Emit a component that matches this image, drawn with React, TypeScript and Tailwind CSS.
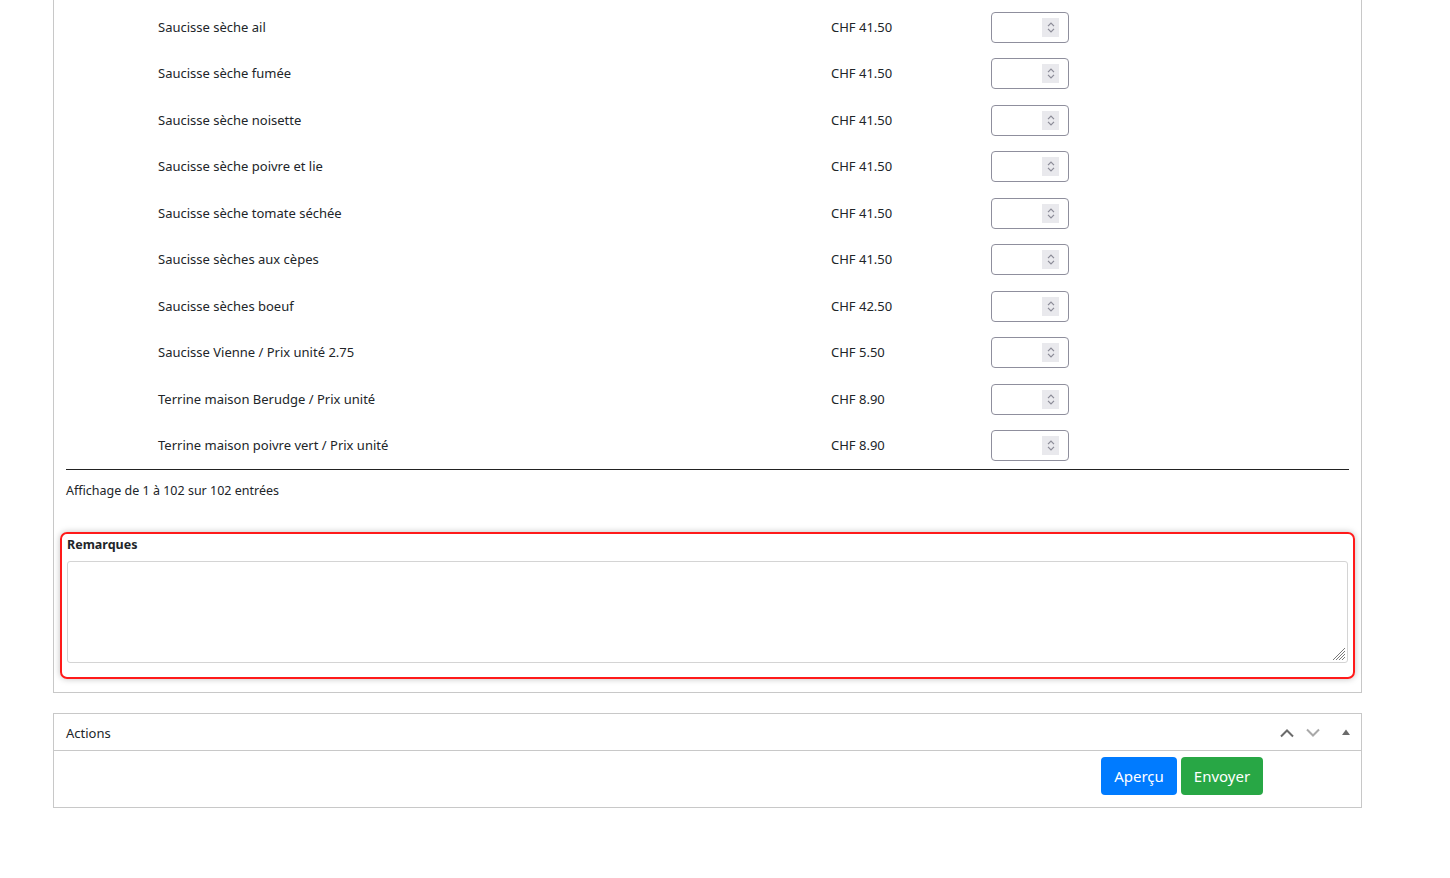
import React from 'react';

const rows: [string, string][] = [
  ['Saucisse sèche ail', 'CHF 41.50'],
  ['Saucisse sèche fumée', 'CHF 41.50'],
  ['Saucisse sèche noisette', 'CHF 41.50'],
  ['Saucisse sèche poivre et lie', 'CHF 41.50'],
  ['Saucisse sèche tomate séchée', 'CHF 41.50'],
  ['Saucisse sèches aux cèpes', 'CHF 41.50'],
  ['Saucisse sèches boeuf', 'CHF 42.50'],
  ['Saucisse Vienne / Prix unité 2.75', 'CHF 5.50'],
  ['Terrine maison Berudge / Prix unité', 'CHF 8.90'],
  ['Terrine maison poivre vert / Prix unité', 'CHF 8.90'],
];

function QtyInput() {
  return (
    <div className="w-[78px] h-[31px] border border-[#8f8f9d] rounded-[4px] flex items-center justify-end pr-[9px] bg-white">
      <div className="w-[17px] h-[19px] bg-[#e9e9ed] flex flex-col items-center justify-center gap-[1px]">
        <svg width="8" height="5" viewBox="0 0 8 5" fill="none" stroke="#8a8a96" strokeWidth="1.2">
          <path d="M1 4.2 L4 1.2 L7 4.2" />
        </svg>
        <svg width="8" height="5" viewBox="0 0 8 5" fill="none" stroke="#8a8a96" strokeWidth="1.2">
          <path d="M1 0.8 L4 3.8 L7 0.8" />
        </svg>
      </div>
    </div>
  );
}

export default function App() {
  return (
    <div className="w-[1450px] h-[878px] bg-white text-[#212529] text-[13px] font-['Noto_Sans',sans-serif] overflow-hidden">
      <div className="ml-[53px] w-[1309px] border-x border-b border-[#c8c8c8] px-[12px] pt-[4px] pb-[13px]">
        <div className="border-b border-[#222]">
          {rows.map(([name, price]) => (
            <div key={name} className="h-[46.5px] flex items-center">
              <div className="w-[765px] pl-[92px]">{name}</div>
              <div className="w-[160px]">{price}</div>
              <QtyInput />
            </div>
          ))}
        </div>
        <div className="pt-[12px] text-[12.5px]">Affichage de 1 à 102 sur 102 entrées</div>
        <div className="mt-[31px] -mx-[6px] border-2 border-[#ff1a1a] rounded-[7px] px-[5px] pt-[2px] pb-[14px] shadow-[0_0_6px_rgba(0,0,0,0.25)]">
          <div className="font-bold text-[12.5px] h-[25px] leading-[18px]">Remarques</div>
          <div className="relative h-[102px] border border-[#d4d4d4] rounded-[3px] bg-white">
            <svg className="absolute right-[1px] bottom-[1px]" width="14" height="14" viewBox="0 0 14 14" stroke="#7a7a7a" strokeWidth="1">
              <path d="M13 1 L1 13 M13 4 L4 13 M13 7 L7 13 M13 10 L10 13" />
            </svg>
          </div>
        </div>
      </div>

      <div className="ml-[53px] mt-[20px] w-[1309px] border border-[#c8c8c8]">
        <div className="h-[37px] border-b border-[#c8c8c8] flex items-center px-[12px] pt-[3px]">
          <div className="flex-1">Actions</div>
          <div className="flex items-center">
            <svg width="16" height="10" viewBox="0 0 16 10" fill="none" stroke="#6b6b6b" strokeWidth="2" className="mr-[10px]">
              <path d="M2 8.5 L8 2.5 L14 8.5" />
            </svg>
            <svg width="16" height="10" viewBox="0 0 16 10" fill="none" stroke="#a9a9a9" strokeWidth="2" className="mr-[20px]">
              <path d="M2 1.5 L8 7.5 L14 1.5" />
            </svg>
            <svg width="10" height="8" viewBox="0 0 10 8" fill="#6b6b6b" className="mr-[-2px] mb-[3px]">
              <path d="M1 7 L5 1.5 L9 7 Z" />
            </svg>
          </div>
        </div>
        <div className="h-[56px] flex items-start justify-end pt-[6px] pr-[98px] gap-[4px]">
          <button className="h-[38px] w-[76px] rounded-[4px] bg-[#007bff] text-white text-[15px]">Aperçu</button>
          <button className="h-[38px] w-[82px] rounded-[4px] bg-[#28a745] text-white text-[15px]">Envoyer</button>
        </div>
      </div>
    </div>
  );
}
